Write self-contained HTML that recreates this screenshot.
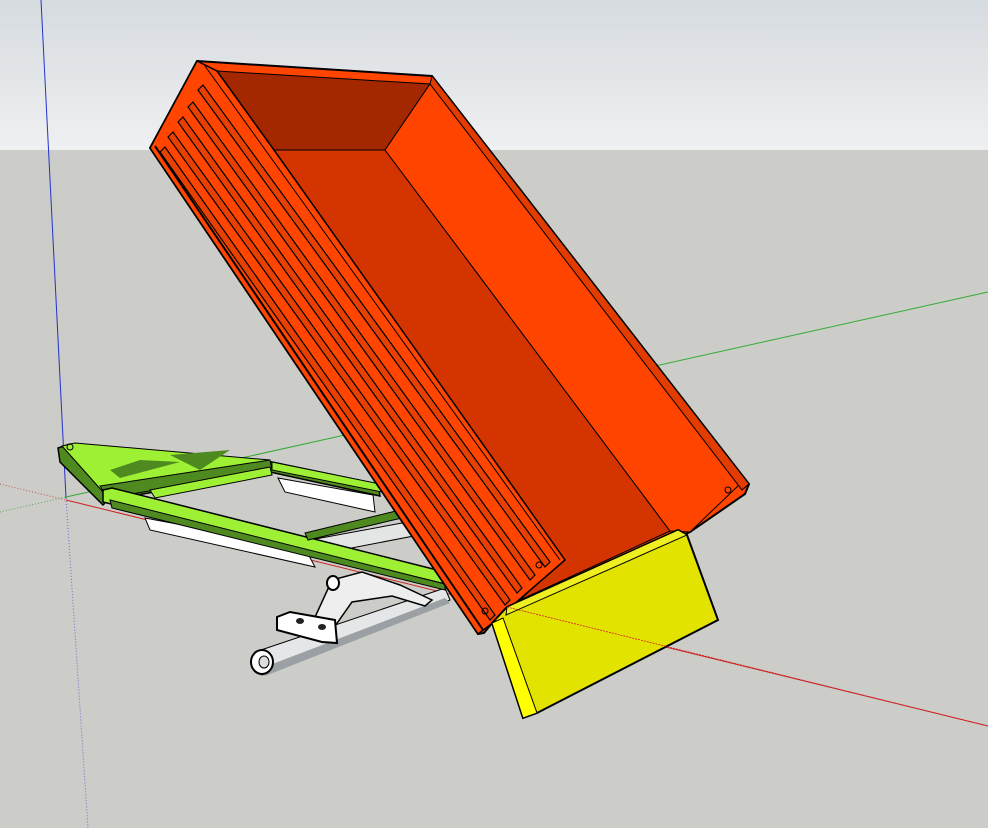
<!DOCTYPE html>
<html><head><meta charset="utf-8"><style>
html,body{margin:0;padding:0;width:988px;height:828px;overflow:hidden;background:#cccdc8}
svg{display:block}
</style></head><body>
<svg width="988" height="828" viewBox="0 0 988 828" xmlns="http://www.w3.org/2000/svg">
<defs>
<linearGradient id="sky" x1="0" y1="0" x2="0" y2="1">
<stop offset="0" stop-color="#d6dbdf"/><stop offset="1" stop-color="#eff0f2"/>
</linearGradient>
</defs>
<rect x="0" y="0" width="988" height="150" fill="url(#sky)"/>
<rect x="0" y="150" width="988" height="678" fill="#cccdc8"/>
<!-- axes -->
<line x1="41" y1="0" x2="66" y2="498" stroke="#2233cc" stroke-width="1"/>
<line x1="66" y1="498" x2="88" y2="828" stroke="#6670cc" stroke-width="1" stroke-dasharray="1,2"/>
<line x1="66" y1="497" x2="988" y2="292" stroke="#33aa33" stroke-width="1"/>
<line x1="0" y1="512" x2="66" y2="497" stroke="#55aa55" stroke-width="1" stroke-dasharray="1,2"/>
<line x1="66" y1="500" x2="988" y2="726" stroke="#cc2222" stroke-width="1"/>
<line x1="0" y1="484" x2="66" y2="500" stroke="#cc5555" stroke-width="1" stroke-dasharray="1,2"/>

<!-- suspension -->
<polygon points="255,652 445,588 450,600 262,675" fill="#e4e6e7" stroke="#000" stroke-width="1"/>
<polygon points="262,668 445,598 450,603 265,676" fill="#9aa0a4"/>
<ellipse cx="262" cy="662" rx="11" ry="12" fill="#fff" stroke="#000" stroke-width="2"/>
<ellipse cx="264" cy="662" rx="5" ry="6" fill="#ddd" stroke="#000" stroke-width="1"/>
<polygon points="310,628 332,580 362,572 400,585 432,600 425,606 392,596 352,602 328,636" fill="#eee" stroke="#000" stroke-width="1.5"/>
<polygon points="277,617 290,612 335,620 337,643 322,642 277,630" fill="#fff" stroke="#000" stroke-width="2"/>
<ellipse cx="300" cy="621" rx="4" ry="3" fill="#222"/>
<ellipse cx="322" cy="627" rx="4" ry="3" fill="#222"/>
<ellipse cx="333" cy="583" rx="6" ry="7" fill="#fff" stroke="#000" stroke-width="2"/>
<polygon points="145,518 305,548 315,567 150,530" fill="#fff" stroke="#000" stroke-width="1"/>
<polygon points="278,478 373,495 375,512 285,492" fill="#fff" stroke="#000" stroke-width="1"/>
<polygon points="310,540 440,516 445,530 315,555" fill="#e4e5e5" stroke="#000" stroke-width="1"/>

<!-- green frame -->
<polygon points="58,448 70,444 272,462 378,484 380,496 270,472 108,500 103,505 60,462" fill="#4f8a20" stroke="#000" stroke-width="1.5"/>
<polygon points="62,446 75,443 270,460 108,490 103,492" fill="#9ef035" stroke="#000" stroke-width="1"/>
<polygon points="100,486 270,460 272,470 108,498" fill="#4f8a20" stroke="#000" stroke-width="1"/>
<polygon points="110,470 140,460 180,462 120,478" fill="#4f8a20"/>
<polygon points="170,455 230,450 200,470" fill="#4f8a20"/>
<polygon points="103,490 112,488 445,572 445,584 103,502" fill="#9ef035" stroke="#000" stroke-width="1.5"/>
<polygon points="110,500 445,584 445,590 112,508" fill="#4f8a20" stroke="#000" stroke-width="1"/>
<polygon points="272,462 380,484 382,492 272,470" fill="#9ef035" stroke="#000" stroke-width="1"/>
<polygon points="150,490 270,467 272,475 155,498" fill="#9ef035" stroke="#000" stroke-width="1"/>
<polygon points="305,533 400,510 402,518 308,540" fill="#4f8a20" stroke="#000" stroke-width="1"/>
<circle cx="70" cy="447" r="3" fill="none" stroke="#000"/>

<!-- box -->
<polygon points="197,61 432,76 749,484 745,494 690,532 493,622 484,633 478,634 150,148" fill="#ff4500" stroke="#000" stroke-width="2"/>
<polygon points="217,71 430,84 385,150 274,150" fill="#a32800" stroke="#000" stroke-width="1"/>
<polygon points="274,150 385,150 670,531 520,600 560,562" fill="#d43500" stroke="#000" stroke-width="1"/>
<polygon points="430,84 740,484 690,532 670,531 385,150" fill="#ff4400" stroke="#000" stroke-width="1"/>
<polygon points="432,76 749,484 742,490 430,84" fill="#e33c00" stroke="#000" stroke-width="1"/>
<!-- left side panel -->
<polygon points="197,61 217,71 274,150 565,560 490,625 478,634 150,148" fill="#ff4500" stroke="#000" stroke-width="1.5"/>
<line x1="205" y1="66" x2="560" y2="560" stroke="#000" stroke-width="1"/>
<line x1="155" y1="146" x2="483" y2="630" stroke="#000" stroke-width="2"/>
<g fill="#e84000" stroke="#000" stroke-width="1.2">
<polygon points="198,90 203,85 550,562 545,567"/>
<polygon points="188,107 193,102 535,575 530,580"/>
<polygon points="178,122 183,117 522,588 517,593"/>
<polygon points="168,137 173,132 510,600 505,605"/>
<polygon points="160,152 165,147 495,615 490,620"/>
</g>
<circle cx="485" cy="611" r="3" fill="none" stroke="#000"/>
<circle cx="539" cy="565" r="3" fill="none" stroke="#000"/>
<circle cx="728" cy="490" r="3" fill="none" stroke="#000"/>
<!-- yellow tailgate -->
<polygon points="492,623 507,607 678,530 687,535 718,620 537,713 523,718" fill="#e3e300" stroke="#000" stroke-width="2"/>
<polygon points="507,607 678,530 687,535 506,615" fill="#eeee20" stroke="#000" stroke-width="1"/>
<polygon points="492,623 503,618 537,713 523,718" fill="#ffff00" stroke="#000" stroke-width="1"/>
<line x1="507" y1="607" x2="988" y2="726" stroke="#cc2222" stroke-width="0.8" stroke-dasharray="2,1"/>
</svg>
</body></html>
